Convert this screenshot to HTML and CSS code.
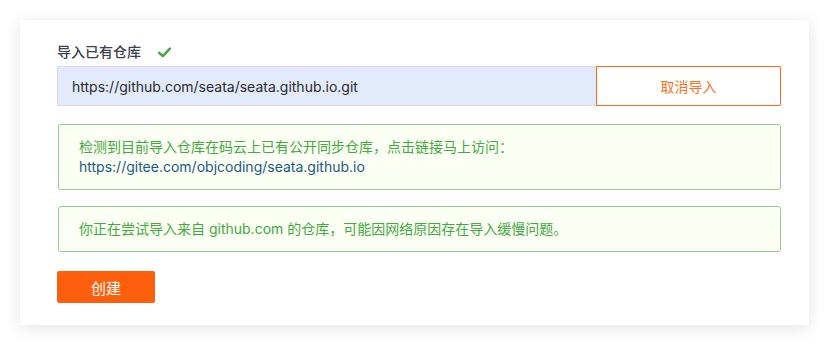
FILE: index.html
```html
<!doctype html>
<html lang="zh-CN">
<head>
    <meta charset="utf-8">
    <meta name="viewport" content="width=device-width, initial-scale=1.0">
    <title>导入已有仓库</title>
    <link rel="stylesheet" href="styles.css">
</head>
<body>
    <div class="card">
        <div class="field-label">
            <span>导入已有仓库</span>
            <svg class="check-icon" width="13" height="11" viewBox="0 0 13 11">
                <path d="M1.2 5.8 L4.8 9.2 L11.8 1.6" fill="none" stroke="#3fa73b" stroke-width="2.4" stroke-linecap="round" stroke-linejoin="round"/>
            </svg>
        </div>

        <div class="import-row">
            <input type="text" class="url-input" value="https://github.com/seata/seata.github.io.git" readonly>
            <button class="btn-cancel">取消导入</button>
        </div>

        <div class="alert">
            检测到目前导入仓库在码云上已有公开同步仓库，点击链接马上访问：<br>
            <a href="#" class="alert-link">https://gitee.com/objcoding/seata.github.io</a>
        </div>

        <div class="alert alert-slim">
            你正在尝试导入来自 github.com 的仓库，可能因网络原因存在导入缓慢问题。
        </div>

        <button class="btn-create">创建</button>
    </div>
</body>
</html>
```

FILE: styles.css
```css
body {
    margin: 0;
    padding: 20px;
    background-color: #fff;
    font-family: Inter, "Noto Sans CJK SC", sans-serif;
    font-size: 14px;
    color: #333;
}
.card {
    width: 789px;
    box-sizing: border-box;
    background-color: #fff;
    box-shadow: 0 3px 16px rgba(0, 0, 0, 0.11);
    padding: 22px 28px 22px 37px;
}
.field-label {
    display: flex;
    align-items: center;
    height: 20px;
    line-height: 20px;
    margin-bottom: 4px;
    font-size: 14px;
    font-weight: 500;
    color: #3c4150;
}
.check-icon {
    margin-left: 17px;
}
.import-row {
    display: flex;
    height: 40px;
}
.url-input {
    flex: 1;
    height: 40px;
    box-sizing: border-box;
    border: 1px solid #d5dce8;
    border-right: none;
    border-radius: 2px 0 0 2px;
    background-color: #e2eafc;
    padding: 0 14px;
    font-family: inherit;
    font-size: 14px;
    color: #2a2a2a;
    outline: none;
}
.btn-cancel {
    width: 185px;
    height: 40px;
    box-sizing: border-box;
    border: 1px solid #fb6a1c;
    border-radius: 0 2px 2px 0;
    background-color: #fff;
    color: #f4741f;
    font-family: inherit;
    font-size: 14px;
    cursor: pointer;
}
.alert {
    margin: 18px 0 0 1px;
    padding: 12px 20px;
    border: 1px solid #99c898;
    border-radius: 3px;
    background-color: #fcfff3;
    color: #44a942;
    line-height: 20px;
    font-size: 14px;
}
.alert-slim {
    margin-top: 16px;
}
.alert-link {
    color: #1b5a86;
    text-decoration: none;
}
.btn-create {
    display: block;
    margin-top: 19px;
    width: 98px;
    height: 32px;
    border: none;
    border-radius: 2px;
    background-color: #fe5f0c;
    color: #fff;
    font-family: inherit;
    font-size: 15px;
    cursor: pointer;
}
```
